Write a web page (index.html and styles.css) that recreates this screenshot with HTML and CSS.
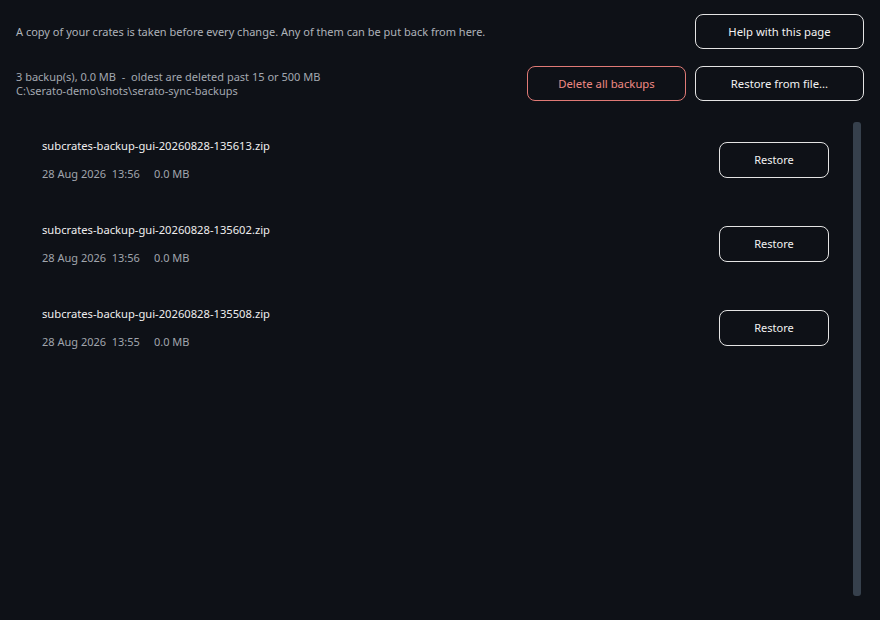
FILE: index.html
```html
<!DOCTYPE html>
<html>
<head>
<meta charset="utf-8">
<link rel="stylesheet" href="styles.css">
</head>
<body>
<div class="page">
  <div class="top">
    <div class="row1">
      <div class="intro">A copy of your crates is taken before every change. Any of them can be put back from here.</div>
      <button class="btn wide">Help with this page</button>
    </div>
    <div class="row2">
      <div class="status">
        <div>3 backup(s), 0.0 MB &nbsp;-&nbsp; oldest are deleted past 15 or 500 MB</div>
        <div>C:\serato-demo\shots\serato-sync-backups</div>
      </div>
      <div class="actions">
        <button class="btn danger">Delete all backups</button>
        <button class="btn wide">Restore from file...</button>
      </div>
    </div>
  </div>
  <div class="listwrap">
    <div class="list">
      <div class="item">
        <div class="info">
          <div class="name">subcrates-backup-gui-20260828-135613.zip</div>
          <div class="meta"><span>28 Aug 2026&nbsp; 13:56</span><span>0.0 MB</span></div>
        </div>
        <button class="btn small">Restore</button>
      </div>
      <div class="item">
        <div class="info">
          <div class="name">subcrates-backup-gui-20260828-135602.zip</div>
          <div class="meta"><span>28 Aug 2026&nbsp; 13:56</span><span>0.0 MB</span></div>
        </div>
        <button class="btn small">Restore</button>
      </div>
      <div class="item">
        <div class="info">
          <div class="name">subcrates-backup-gui-20260828-135508.zip</div>
          <div class="meta"><span>28 Aug 2026&nbsp; 13:55</span><span>0.0 MB</span></div>
        </div>
        <button class="btn small">Restore</button>
      </div>
    </div>
    <div class="scrollbar"></div>
  </div>
</div>
</body>
</html>
```

FILE: styles.css
```css
html, body {
  margin: 0;
  padding: 0;
  background: #0e1117;
  width: 880px;
  height: 620px;
  overflow: hidden;
}
.page {
  font-family: "Noto Sans", "Open Sans", sans-serif;
  color: #e8e8e8;
  height: 620px;
  display: flex;
  flex-direction: column;
}
.top {
  padding: 14px 16px 0 16px;
  display: flex;
  flex-direction: column;
  gap: 17px;
}
.row1, .row2 {
  display: flex;
  justify-content: space-between;
  align-items: center;
}
.intro {
  font-size: 11px;
  color: #aeb3ba;
}
.status {
  font-size: 11px;
  color: #a3a8b0;
  line-height: 14px;
}
.actions {
  display: flex;
  gap: 9px;
}
.btn {
  font-family: "Noto Sans", "Open Sans", sans-serif;
  font-size: 11.3px;
  color: #f2f2f2;
  background: #0e1117;
  border: 1px solid #e4e4e4;
  border-radius: 8px;
  height: 35px;
  padding: 0;
  cursor: pointer;
}
.btn.wide {
  width: 169px;
}
.btn.danger {
  width: 159px;
  border-color: #e07a76;
  color: #ee8a84;
}
.btn.small {
  width: 110px;
  height: 36px;
  font-size: 11px;
  padding-bottom: 1px;
}
.listwrap {
  display: flex;
  margin-top: 17px;
  padding-left: 42px;
  padding-right: 19px;
}
.list {
  flex: 1;
  display: flex;
  flex-direction: column;
  padding-right: 24px;
}
.item {
  height: 84px;
  display: flex;
  align-items: center;
  justify-content: space-between;
}
.info {
  display: flex;
  flex-direction: column;
  gap: 10px;
}
.name {
  font-size: 11.2px;
  color: #eeeeee;
  line-height: 18px;
}
.meta {
  font-size: 11px;
  color: #a0a5ad;
  display: flex;
  gap: 14px;
  line-height: 18px;
}
.scrollbar {
  width: 8px;
  height: 474px;
  margin-top: 4px;
  background: #36404c;
  border-radius: 3px;
}
```
